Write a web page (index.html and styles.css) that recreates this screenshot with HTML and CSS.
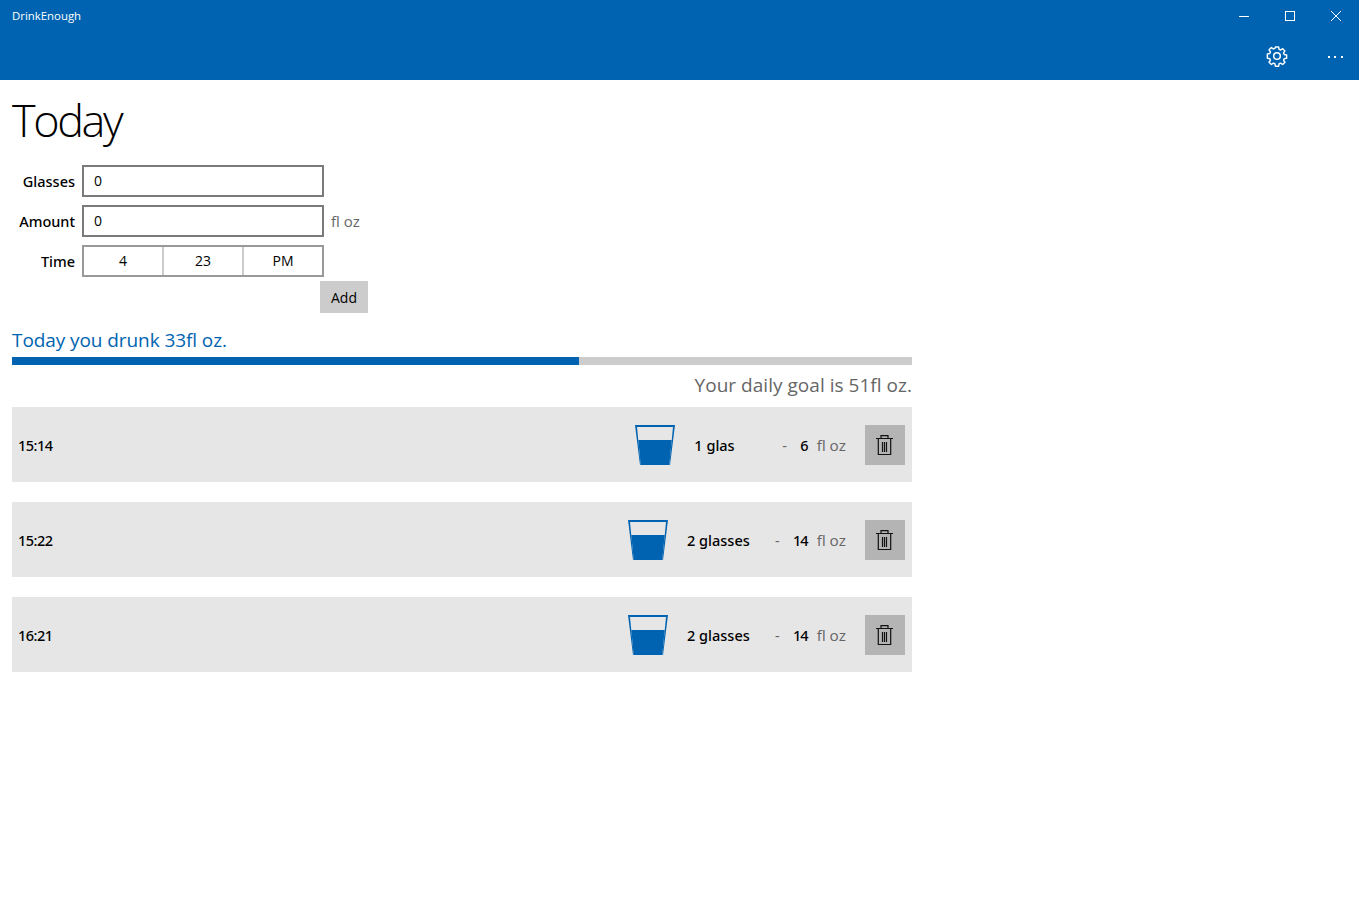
FILE: index.html
```html
<!DOCTYPE html>
<html lang="en">
<head>
<meta charset="utf-8">
<title>DrinkEnough</title>
<link rel="stylesheet" href="styles.css">
</head>
<body>
<header class="appbar">
  <div class="titlerow">
    <span class="apptitle">DrinkEnough</span>
    <div class="winctrls">
      <span class="winbtn"><svg width="12" height="12" viewBox="0 0 12 12"><path d="M1 6.500h10" stroke="#fff" fill="none"/></svg></span>
      <span class="winbtn"><svg width="12" height="12" viewBox="0 0 12 12"><rect x="1.500" y="1.500" width="9" height="9" stroke="#fff" fill="none"/></svg></span>
      <span class="winbtn"><svg width="12" height="12" viewBox="0 0 12 12"><path d="M1 1l10 10M11 1L1 11" stroke="#fff" fill="none"/></svg></span>
    </div>
  </div>
  <div class="cmdrow">
    <span class="cmdbtn"><svg width="22" height="22" viewBox="0 0 22 22"><path d="M9.200 1.500h3.600l.5 2.700 1.700.7 2.300-1.500 2.500 2.500-1.500 2.300.7 1.700 2.700.5v3.600l-2.700.5-.7 1.700 1.500 2.300-2.500 2.500-2.300-1.500-1.700.7-.5 2.700H9.200l-.5-2.700-1.700-.7-2.300 1.500-2.500-2.500 1.500-2.300-.7-1.700-2.700-.5V9.200l2.700-.5.7-1.700-1.500-2.300 2.500-2.500 2.300 1.500 1.700-.7z" transform="translate(1.100 .6) scale(.9)" stroke="#fff" stroke-width="1.600" fill="none" stroke-linejoin="round"/><circle cx="11" cy="11" r="3.300" stroke="#fff" stroke-width="1.500" fill="none"/></svg></span>
    <span class="cmdbtn more"><i></i><i></i><i></i></span>
  </div>
</header>
<main class="content">
  <h1 class="pagetitle">Today</h1>
  <form class="entry">
    <label class="lbl">Glasses</label>
    <div class="field">0</div>
    <span></span>
    <label class="lbl">Amount</label>
    <div class="field">0</div>
    <span class="unit">fl oz</span>
    <label class="lbl">Time</label>
    <div class="timepicker"><span>4</span><span>23</span><span>PM</span></div>
    <span></span>
  </form>
  <div class="addrow"><button type="button" class="addbtn">Add</button></div>
  <div class="summary">
    <div class="drunk">Today you drunk 33fl oz.</div>
    <div class="progress"><div class="progress-fill" style="width:63%"></div></div>
    <div class="goal">Your daily goal is 51fl oz.</div>
  </div>
  <ul class="entries">
    <li class="row">
      <span class="time">15:14</span>
      <svg class="glass" width="40" height="40" viewBox="0 0 40 40"><path d="M3.300 15h33.400L34.300 40H5.700z" fill="#0063b1"/><path d="M0 0h40L35 40h-.7L38 2H2l3.700 38H5z" fill="#0063b1"/></svg>
      <span class="qty">1 glas</span>
      <span class="dash">-</span>
      <span class="num">6</span>
      <span class="unit">fl oz</span>
      <span class="del"><svg width="20" height="22" viewBox="0 0 20 22"><path d="M1 4.500h17M6 4.500V1.700h7v2.800M3.300 4.500V20.500h12.400V4.500M7.500 8v10M9.500 8v10M11.500 8v10" fill="none" stroke="#111" stroke-width="1.200"/></svg></span>
    </li>
    <li class="row">
      <span class="time">15:22</span>
      <svg class="glass" width="40" height="40" viewBox="0 0 40 40"><path d="M3.300 15h33.400L34.300 40H5.700z" fill="#0063b1"/><path d="M0 0h40L35 40h-.7L38 2H2l3.700 38H5z" fill="#0063b1"/></svg>
      <span class="qty">2 glasses</span>
      <span class="dash">-</span>
      <span class="num">14</span>
      <span class="unit">fl oz</span>
      <span class="del"><svg width="20" height="22" viewBox="0 0 20 22"><path d="M1 4.500h17M6 4.500V1.700h7v2.800M3.300 4.500V20.500h12.400V4.500M7.500 8v10M9.500 8v10M11.500 8v10" fill="none" stroke="#111" stroke-width="1.200"/></svg></span>
    </li>
    <li class="row">
      <span class="time">16:21</span>
      <svg class="glass" width="40" height="40" viewBox="0 0 40 40"><path d="M3.300 15h33.400L34.300 40H5.700z" fill="#0063b1"/><path d="M0 0h40L35 40h-.7L38 2H2l3.700 38H5z" fill="#0063b1"/></svg>
      <span class="qty">2 glasses</span>
      <span class="dash">-</span>
      <span class="num">14</span>
      <span class="unit">fl oz</span>
      <span class="del"><svg width="20" height="22" viewBox="0 0 20 22"><path d="M1 4.500h17M6 4.500V1.700h7v2.800M3.300 4.500V20.500h12.400V4.500M7.500 8v10M9.500 8v10M11.500 8v10" fill="none" stroke="#111" stroke-width="1.200"/></svg></span>
    </li>
  </ul>
</main>
</body>
</html>
```
FILE: styles.css
```css
* { box-sizing: border-box; }
html, body { margin: 0; padding: 0; background: #fff; }
body { font-family: "Open Sans", "Noto Sans", sans-serif; color: #000; height: 906px; overflow: hidden; }
.appbar { background: #0063b1; height: 80px; color: #fff; display: flex; flex-direction: column; }
.titlerow { height: 32px; display: flex; justify-content: space-between; align-items: center; padding-left: 12px; }
.apptitle { font-size: 11.400px; line-height: 30px; padding-bottom: 1px; }
.winctrls { display: flex; }
.winbtn { width: 46px; height: 32px; display: flex; align-items: center; justify-content: center; }
.cmdrow { height: 48px; display: flex; justify-content: flex-end; column-gap: 10px; }
.cmdbtn { width: 48px; height: 48px; display: flex; align-items: center; justify-content: center; }
.cmdbtn.more { gap: 4.500px; padding-top: 1px; }
.more i { width: 2px; height: 2px; background: #fff; display: block; }
.content { padding: 0 12px; }
.pagetitle { font-size: 45px; font-weight: 300; line-height: 60px; margin: 10px 0 15px; letter-spacing: -2.400px; }
.entry { display: grid; grid-template-columns: 63px 242px auto; column-gap: 7px; row-gap: 8px; align-items: center; justify-content: start; }
.lbl { font-family: "Noto Sans", "Open Sans", sans-serif; font-size: 14.500px; font-weight: 500; text-align: right; }
.field { height: 32px; border: 2px solid #7a7a7a; padding-left: 10px; font-size: 14px; line-height: 27px; }
.unit { font-size: 15px; color: #666; }
.timepicker { height: 32px; border: 2px solid #999; display: grid; grid-template-columns: 80px 80px 78px; font-size: 14px; text-align: center; line-height: 27px; }
.timepicker span:not(:last-child) { border-right: 2px solid #ccc; }
.addrow { margin-top: 4px; padding-left: 308px; }
.addbtn { width: 48px; height: 32px; background: #ccc; border: 0; padding: 0; font: 14px "Open Sans", sans-serif; color: #000; }
.summary { width: 900px; margin-top: 14px; }
.drunk { font-size: 19px; line-height: 27px; color: #0063b1; letter-spacing: -.08px; }
.progress { height: 8px; background: #ccc; margin-top: 3px; }
.progress-fill { height: 100%; background: #0063b1; }
.goal { font-size: 19px; line-height: 27px; color: #666; text-align: right; margin-top: 7px; letter-spacing: .03px; }
.entries { list-style: none; margin: 8px 0 0; padding: 0; width: 900px; display: flex; flex-direction: column; gap: 20px; }
.row { height: 75px; background: #e6e6e6; display: flex; align-items: center; padding: 0 7px 0 6px; font-family: "Noto Sans", "Open Sans", sans-serif; font-size: 14.500px; font-weight: 500; }
.time, .qty, .dash, .num { padding-top: 1px; }
.time { margin-right: auto; letter-spacing: -.5px; }
.glass { margin-right: 19px; }
.qty { width: 88px; }
.dash { width: 18px; color: #666; font-weight: 400; }
.num { margin-right: 9px; letter-spacing: -1px; }
.row .unit { margin-right: 19px; font-family: "Open Sans", sans-serif; font-size: 15.300px; font-weight: 400; }
.del { width: 40px; height: 40px; background: #b4b4b4; display: flex; align-items: center; justify-content: center; }
```
